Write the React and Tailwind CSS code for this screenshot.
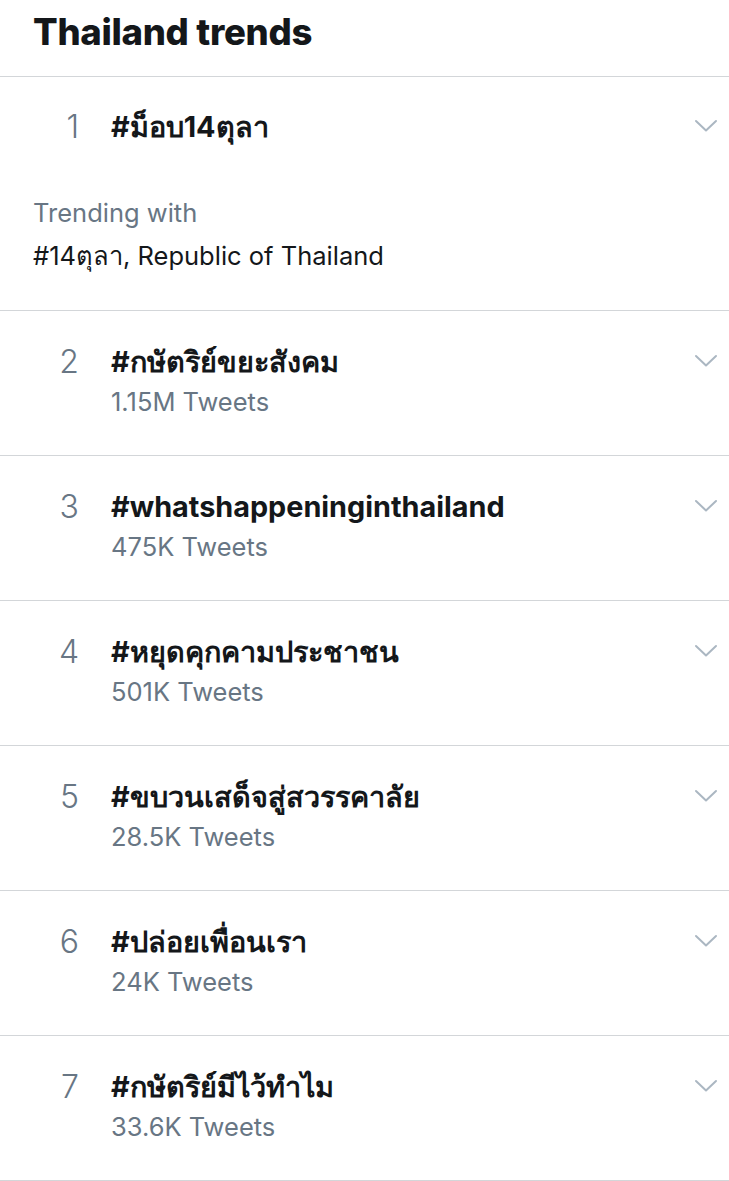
import React from "react";

const trends = [
  { n: 2, tag: "#กษัตริย์ขยะสังคม", count: "1.15M Tweets" },
  { n: 3, tag: "#whatshappeninginthailand", count: "475K Tweets" },
  { n: 4, tag: "#หยุดคุกคามประชาชน", count: "501K Tweets" },
  { n: 5, tag: "#ขบวนเสด็จสู่สวรรคาลัย", count: "28.5K Tweets" },
  { n: 6, tag: "#ปล่อยเพื่อนเรา", count: "24K Tweets" },
  { n: 7, tag: "#กษัตริย์มีไว้ทำไม", count: "33.6K Tweets" },
];

function Chevron() {
  return (
    <svg width="24" height="14" viewBox="0 0 24 14" fill="none" className="shrink-0">
      <path d="M2 2 L12 11.5 L22 2" stroke="#abb7c2" strokeWidth="2" strokeLinecap="round" strokeLinejoin="round" />
    </svg>
  );
}

export default function App() {
  return (
    <div className="w-[729px] h-[1181px] bg-white overflow-hidden text-[#14171a]" style={{ fontFamily: 'Inter, "Noto Sans", sans-serif' }}>
      <div className="h-[77px] px-[33px] pt-[10px] border-b border-[#d3d6d9]">
        <h1 className="text-[36.5px] font-extrabold tracking-[-0.3px] leading-[44px]">Thailand trends</h1>
      </div>

      <div className="h-[234px] border-b border-[#d3d6d9] px-[33px] pt-[30px]">
        <div className="flex items-start">
          <div className="w-[78px] flex justify-end pr-[32px] text-[32px] leading-[40px] text-[#687684] font-light">1</div>
          <div className="flex-1 text-[28.8px] font-bold leading-[40px]">#ม็อบ14ตุลา</div>
          <div className="pt-[12px] mr-[-22px]"><Chevron /></div>
        </div>
        <div className="mt-[51px] text-[25.5px] leading-[30px] text-[#687684]">Trending with</div>
        <div className="mt-[13px] text-[25.5px] leading-[30px]">#14ตุลา, Republic of Thailand</div>
      </div>

      {trends.map((t) => (
        <div key={t.n} className="h-[145px] border-b border-[#d3d6d9] pl-[33px] pt-[31px]">
          <div className="flex items-start">
            <div className="w-[78px] flex justify-end pr-[32px] text-[32px] leading-[40px] text-[#687684] font-light">{t.n}</div>
            <div className="flex-1">
              <div className="text-[28.8px] font-bold leading-[40px]">{t.tag}</div>
              <div className="mt-[5px] text-[25.5px] leading-[30px] text-[#687684]">{t.count}</div>
            </div>
            <div className="pt-[12px] pr-[11px]"><Chevron /></div>
          </div>
        </div>
      ))}
    </div>
  );
}
